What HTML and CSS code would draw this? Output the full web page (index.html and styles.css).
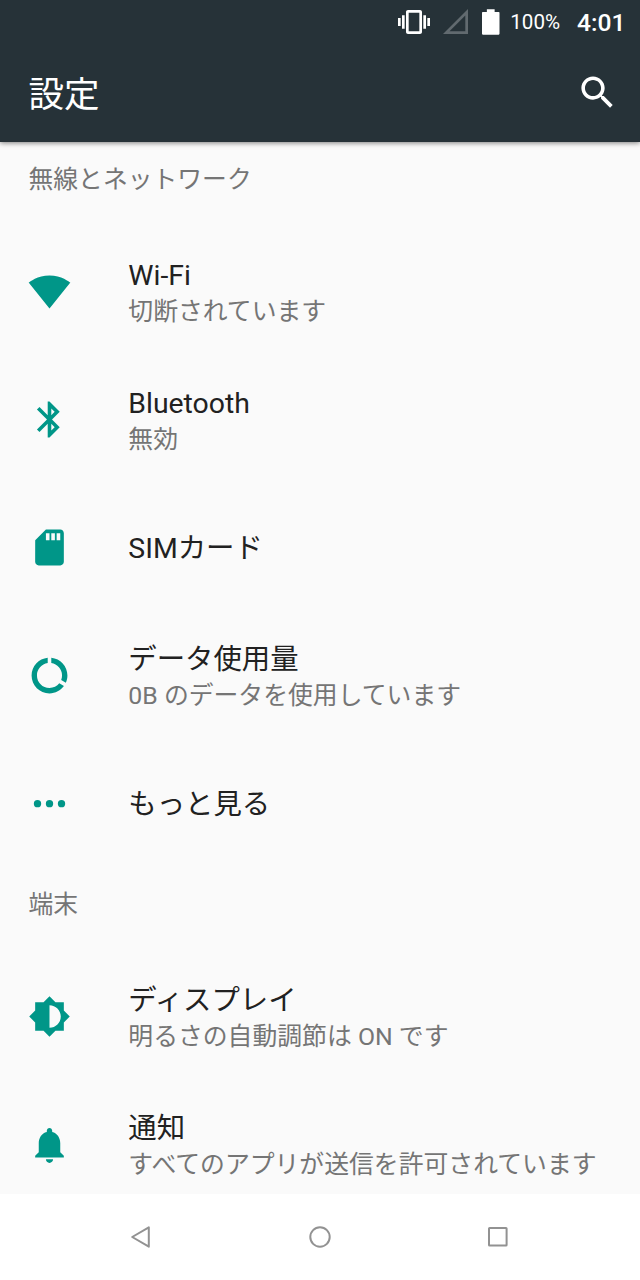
FILE: index.html
```html
<!DOCTYPE html>
<html lang="ja">
<head>
  <meta charset="UTF-8" />
  <meta name="viewport" content="width=device-width, initial-scale=1" />
  <title>設定</title>
  <link rel="stylesheet" href="styles.css">
</head>
<body>
  <header class="header">
    <div class="status-bar">
      <svg class="vibrate" viewBox="0 0 24 24"><path d="M0 15h2V9H0v6zm3 2h2V7H3v10zm19-8v6h2V9h-2zm-3 8h2V7h-2v10zM16.5 3h-9C6.67 3 6 3.67 6 4.5v15c0 .83.67 1.5 1.5 1.5h9c.83 0 1.5-.67 1.5-1.5v-15c0-.83-.67-1.5-1.5-1.5zM16 19H8V5h8v14z"/></svg>
      <svg class="signal" viewBox="0 0 26 26"><path d="M26 0v26H0zM23.2 6.8L6.8 23.2h16.4z"/></svg>
      <svg class="battery" viewBox="0 0 18 26"><path d="M5 0h8v2.6h4.2q.8 0 .8.8v21.8q0 .8-.8.8H.8q-.8 0-.8-.8V3.4q0-.8.8-.8H5z"/></svg>
      <span class="percent">100%</span>
      <span class="clock">4:01</span>
    </div>
    <div class="toolbar">
      <h1>設定</h1>
      <svg class="icon" viewBox="0 0 24 24"><path d="M15.5 14h-.79l-.28-.27C15.41 12.59 16 11.11 16 9.5 16 5.91 13.09 3 9.5 3S3 5.91 3 9.5 5.91 16 9.5 16c1.61 0 3.09-.59 4.23-1.57l.27.28v.79l5 4.99L20.49 19l-4.99-5zm-6 0C7.01 14 5 11.99 5 9.5S7.01 5 9.5 5 14 7.01 14 9.5 11.99 14 9.5 14z"/></svg>
    </div>
  </header>

  <main class="content">
    <h2>無線とネットワーク</h2>
    <ul class="list">
      <li class="item">
        <svg class="icon" viewBox="0 0 24 24"><path d="M12.01 21.49L23.64 7c-.45-.34-4.93-4-11.64-4C5.28 3 .81 6.66.36 7l11.63 14.49.01.01.01-.01z"/></svg>
        <div class="text">
          <p class="title">Wi-Fi</p>
          <p class="summary">切断されています</p>
        </div>
      </li>
      <li class="item">
        <svg class="icon" viewBox="0 0 24 24"><path d="M17.71 7.71L12 2h-1v7.59L6.41 5 5 6.41 10.59 12 5 17.59 6.41 19 11 14.41V22h1l5.71-5.71-4.3-4.29 4.3-4.29zM13 5.83l1.88 1.88L13 9.59V5.83zm1.88 10.46L13 18.17v-3.76l1.88 1.88z"/></svg>
        <div class="text">
          <p class="title">Bluetooth</p>
          <p class="summary">無効</p>
        </div>
      </li>
      <li class="item">
        <svg class="icon" viewBox="0 0 24 24"><path d="M18 2h-8L4.02 8 4 20c0 1.1.9 2 2 2h12c1.1 0 2-.9 2-2V4c0-1.1-.9-2-2-2zm-6 6h-2V4h2v4zm3 0h-2V4h2v4zm3 0h-2V4h2v4z"/></svg>
        <div class="text single">
          <p class="title">SIMカード</p>
        </div>
      </li>
      <li class="item">
        <svg class="icon" viewBox="0 0 24 24"><path d="M13 2.05v3.03c3.39.49 6 3.39 6 6.92 0 .9-.18 1.75-.48 2.54l2.6 1.53c.56-1.24.88-2.62.88-4.07 0-5.18-3.95-9.45-9-9.95zM12 19c-3.87 0-7-3.13-7-7 0-3.53 2.61-6.43 6-6.92V2.05c-5.06.5-9 4.76-9 9.95 0 5.52 4.47 10 9.99 10 3.31 0 6.24-1.61 8.06-4.09l-2.6-1.53C16.17 17.98 14.21 19 12 19z"/></svg>
        <div class="text">
          <p class="title">データ使用量</p>
          <p class="summary">0B のデータを使用しています</p>
        </div>
      </li>
      <li class="item">
        <svg class="icon" viewBox="0 0 24 24"><circle cx="5.3" cy="12.1" r="2.05"/><circle cx="12" cy="12.1" r="2.05"/><circle cx="18.7" cy="12.1" r="2.05"/></svg>
        <div class="text single">
          <p class="title">もっと見る</p>
        </div>
      </li>
    </ul>

    <h2>端末</h2>
    <ul class="list">
      <li class="item">
        <svg class="icon" viewBox="0 0 24 24"><path d="M20 15.31L23.31 12 20 8.69V4h-4.69L12 .69 8.69 4H4v4.69L.69 12 4 15.31V20h4.69L12 23.31 15.31 20H20v-4.69zM12 18.3V5.7c3.48 0 6.3 2.82 6.3 6.3s-2.82 6.3-6.3 6.3z"/></svg>
        <div class="text">
          <p class="title">ディスプレイ</p>
          <p class="summary">明るさの自動調節は ON です</p>
        </div>
      </li>
      <li class="item">
        <svg class="icon" viewBox="0 0 24 24"><path d="M12 22.3c1.1 0 2-.9 2-2h-4c0 1.1.89 2 2 2zm6-6v-5c0-3.07-1.64-5.64-4.5-6.32V4.3c0-.83-.67-1.5-1.5-1.5s-1.5.67-1.5 1.5v.68C7.63 5.66 6 8.22 6 11.3v5l-2 2v1h16v-1l-2-2z"/></svg>
        <div class="text">
          <p class="title">通知</p>
          <p class="summary">すべてのアプリが送信を許可されています</p>
        </div>
      </li>
    </ul>
  </main>

  <nav class="nav-bar">
    <svg viewBox="0 0 24 24"><path d="M18.8 2.3v19.4L2.2 12z"/></svg>
    <svg viewBox="0 0 24 24"><circle cx="12" cy="12" r="9.7"/></svg>
    <svg viewBox="0 0 24 24"><rect x="3" y="3" width="17.6" height="17.6" rx=".6"/></svg>
  </nav>
</body>
</html>
```

FILE: styles.css
```css
* {
  box-sizing: border-box;
}

body {
  display: flex;
  flex-direction: column;
  height: 1280px;
  margin: 0;
  overflow: hidden;
  font-family: Roboto, "Noto Sans CJK JP", sans-serif;
  background: #fafafa;
}

h1, h2, p, ul {
  margin: 0;
  padding: 0;
  font-weight: normal;
}

svg {
  display: block;
  flex: none;
}

.header {
  flex: none;
  height: 142px;
  background: #263238;
  color: #fff;
  fill: #fff;
  box-shadow: 0 1px 5px rgba(0, 0, 0, 0.5);
}

.status-bar {
  display: flex;
  align-items: center;
  justify-content: flex-end;
  height: 43px;
  padding-right: 14.5px;
}

.vibrate {
  width: 32px;
  height: 32px;
}

.signal {
  width: 25px;
  height: 25px;
  margin-left: 13px;
  fill: #616a6f;
}

.battery {
  width: 17.5px;
  height: 26px;
  margin-left: 14px;
}

.percent {
  margin-left: 10.5px;
  padding-top: 1px;
  font-size: 20.6px;
}

.clock {
  margin-left: 17px;
  padding-top: 1px;
  font-size: 24.6px;
  font-weight: 500;
  line-height: 43px;
}

.toolbar {
  display: flex;
  align-items: center;
  justify-content: space-between;
  height: 99px;
  padding: 0 21px 0 28.5px;
}

.toolbar h1 {
  padding-top: 4px;
  font-size: 35.5px;
  line-height: 40px;
}

.icon {
  width: 43px;
  height: 43px;
}

.content {
  flex: 1;
  min-height: 0;
  overflow: hidden;
}

.content h2 {
  height: 85px;
  padding: 20px 28.5px 0;
  color: #757575;
  font-size: 24.8px;
  line-height: 36px;
}

.list {
  list-style: none;
}

.item {
  display: flex;
  align-items: center;
  height: 128px;
  padding-left: 28px;
  fill: #009688;
}

.text {
  margin-left: 57.3px;
  padding-top: 5px;
  line-height: 36px;
  white-space: nowrap;
}

.text.single {
  padding-top: 4px;
}

.title {
  color: #212121;
  font-size: 28.4px;
}

.summary {
  color: #757575;
  font-size: 24.84px;
}

.nav-bar {
  display: flex;
  flex: none;
  align-items: center;
  justify-content: center;
  gap: 154px;
  height: 86px;
  background: #fff;
}

.nav-bar svg {
  width: 24px;
  height: 24px;
  fill: none;
  stroke: #929292;
  stroke-width: 2;
  stroke-linejoin: round;
}
```
